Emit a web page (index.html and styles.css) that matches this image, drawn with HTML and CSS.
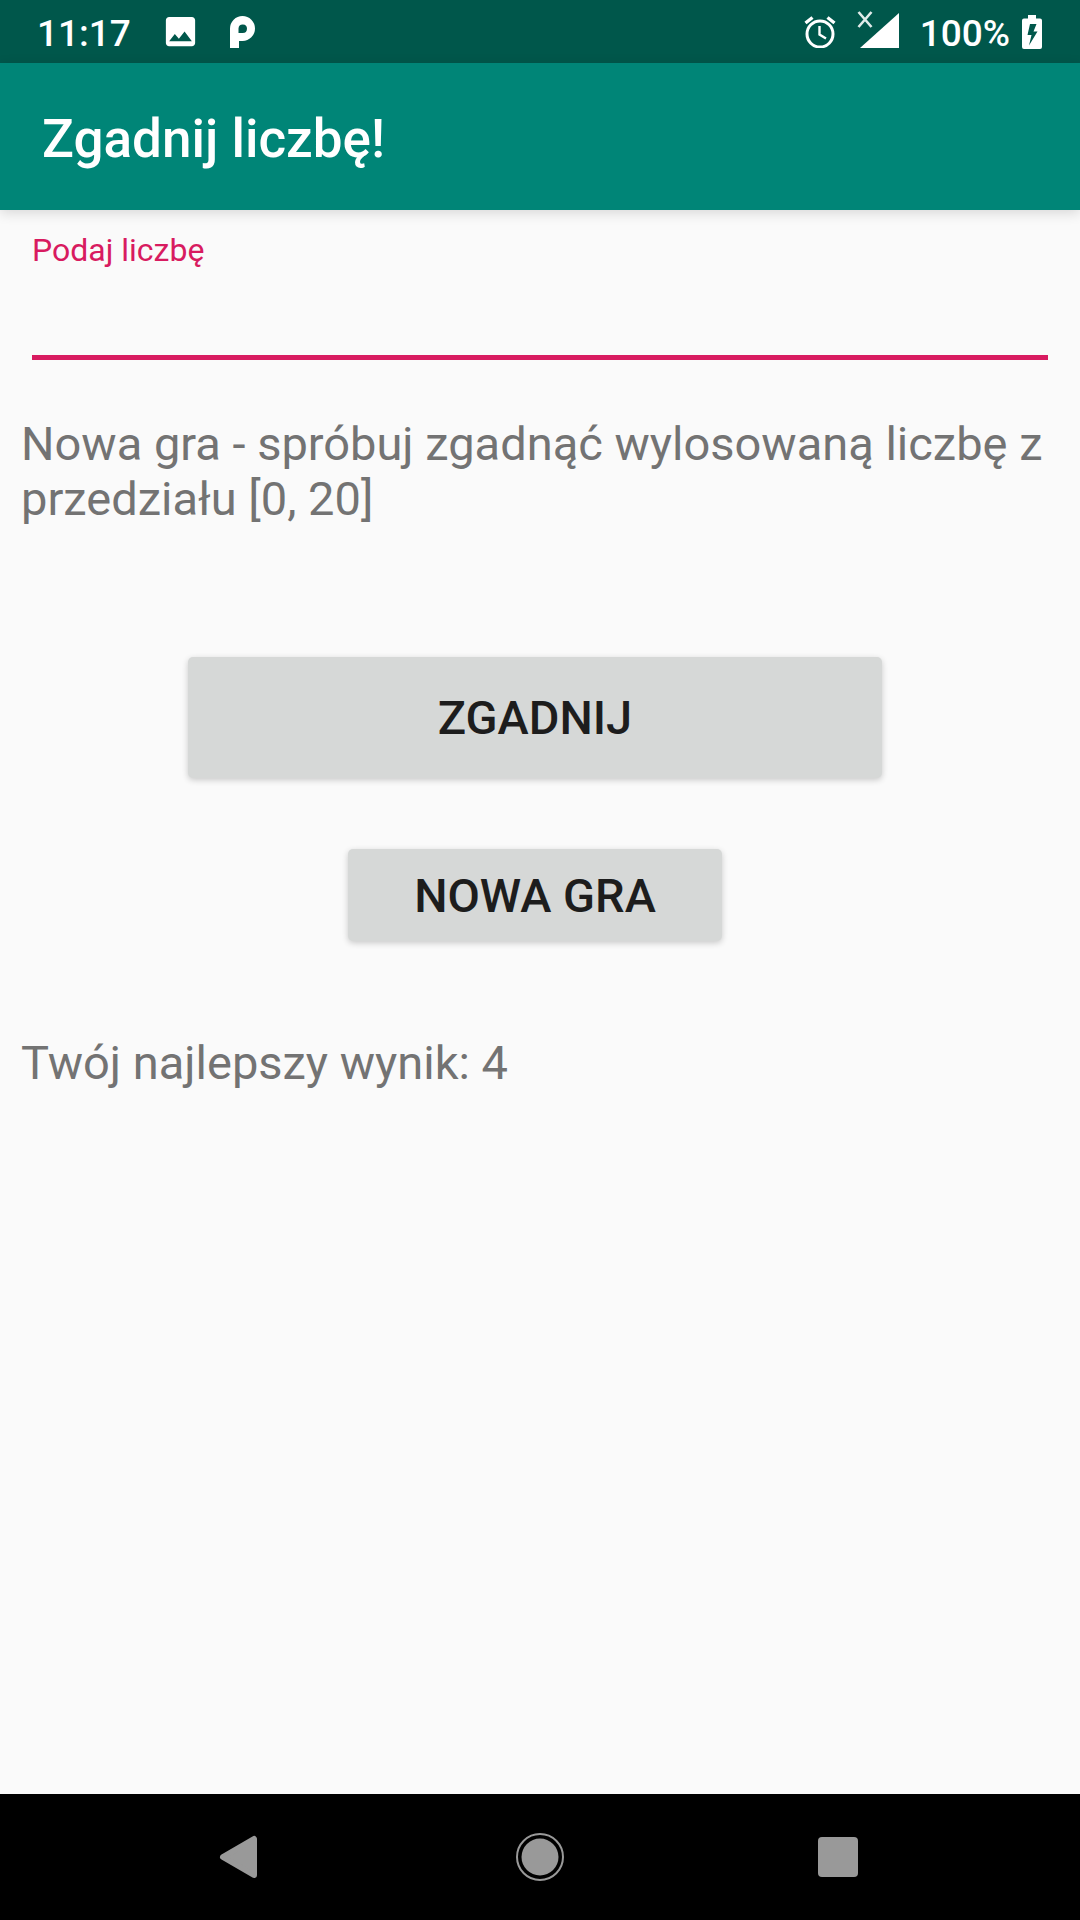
FILE: index.html
```html
<!DOCTYPE html>
<html lang="pl">
<head>
<meta charset="utf-8">
<meta name="viewport" content="width=device-width, initial-scale=1">
<title>Zgadnij liczbę!</title>
<link rel="stylesheet" href="styles.css">
</head>
<body class="screen">
  <div class="status-bar">
    <div class="status-left">
      <span class="status-text">11:17</span>
      <svg class="icon-image" viewBox="0 0 24 24" aria-hidden="true"><path fill="#fff" d="M21 19V5c0-1.100-.9-2-2-2H5c-1.100 0-2 .9-2 2v14c0 1.100.9 2 2 2h14c1.100 0 2-.9 2-2zM8.500 13.500l2.500 3.010L14.500 12l4.500 6H5l3.500-4.500z"/></svg>
      <svg class="icon-p" viewBox="0 0 26 32" aria-hidden="true"><path fill="#fff" fill-rule="evenodd" d="M0 32V12.500A12.500 12.500 0 1 1 12.500 25H9V32ZM8.500 17V12.500A4.250 4.250 0 1 1 12.750 17Z"/></svg>
    </div>
    <div class="status-right">
      <svg class="icon-alarm" viewBox="0 0 32 32" aria-hidden="true"><g fill="none" stroke="#fff"><circle cx="16" cy="18" r="13" stroke-width="3"/><path stroke-width="3.400" d="M1.500 7L8.500 1.500M30.500 7L23.500 1.500"/><path stroke-width="2.400" d="M15.500 10V18.500L22 22.500"/></g></svg>
      <svg class="icon-signal" viewBox="0 0 42 37" aria-hidden="true"><path fill="#fff" d="M3 37L42 2V37Z"/><path fill="none" stroke="#e0ebea" stroke-width="2.600" d="M1.500 1L14.500 16M14.500 1L1.500 16"/></svg>
      <div class="battery">
        <span class="status-text">100%</span>
        <svg class="icon-battery" viewBox="0 0 20 34" aria-hidden="true"><path fill="#fff" fill-rule="evenodd" d="M6 0H14V3.500H18Q20 3.500 20 5.500V32Q20 34 18 34H2Q0 34 0 32V5.500Q0 3.500 2 3.500H6ZM14.500 9H8L5.500 20H9.500L7 30.500L15.500 16.500H11.500Z"/></svg>
      </div>
    </div>
  </div>

  <header class="app-bar">
    <h1 class="app-title">Zgadnij liczbę!</h1>
  </header>

  <main class="content">
    <div class="field">
      <label class="field-label" for="guess">Podaj liczbę</label>
      <input class="field-input" id="guess" type="text" inputmode="numeric">
    </div>
    <p class="message">Nowa gra - spróbuj zgadnąć wylosowaną liczbę z przedziału [0, 20]</p>
    <div class="actions">
      <button class="button button-guess" type="button">ZGADNIJ</button>
      <button class="button button-new" type="button">NOWA GRA</button>
    </div>
    <p class="message">Twój najlepszy wynik: 4</p>
  </main>

  <nav class="nav-bar" aria-label="System">
    <button class="nav-button" type="button" aria-label="Wstecz">
      <svg class="nav-icon" viewBox="0 0 48 48" aria-hidden="true"><path fill="#999" stroke="#999" stroke-width="6" stroke-linejoin="round" d="M5 24L36 6V42Z"/></svg>
    </button>
    <button class="nav-button" type="button" aria-label="Ekran główny">
      <svg class="nav-icon" viewBox="0 0 48 48" aria-hidden="true"><circle cx="24" cy="24" r="18.500" fill="#999"/><circle cx="24" cy="24" r="23" fill="none" stroke="#999" stroke-width="2"/></svg>
    </button>
    <button class="nav-button" type="button" aria-label="Ostatnie">
      <svg class="nav-icon" viewBox="0 0 48 48" aria-hidden="true"><rect x="4" y="4" width="40" height="40" rx="4" fill="#999"/></svg>
    </button>
  </nav>
</body>
</html>
```

FILE: styles.css
```css
* {
  box-sizing: border-box;
}

.screen {
  display: flex;
  flex-direction: column;
  min-height: 100vh;
  margin: 0;
  background: #fafafa;
  font-family: Roboto, "Noto Sans", sans-serif;
}

/* Status bar */
.status-bar {
  display: flex;
  justify-content: space-between;
  height: 63px;
  padding: 0 38px 0 37px;
  background: #00574b;
}

.status-left,
.status-right,
.battery {
  display: flex;
  align-items: center;
}

.status-left {
  gap: 30px;
}

.status-right {
  gap: 21px;
}

.battery {
  gap: 12px;
}

.status-text {
  padding-top: 4px;
  color: #fff;
  font-size: 37px;
  font-weight: 500;
  line-height: 59px;
}

.icon-image {
  width: 39px;
  height: 39px;
}

.icon-p {
  width: 26px;
  height: 32px;
}

.icon-alarm {
  width: 32px;
  height: 32px;
}

.icon-signal {
  width: 42px;
  height: 37px;
  margin-bottom: 4px;
}

.icon-battery {
  width: 20px;
  height: 34px;
}

/* App bar */
.app-bar {
  display: flex;
  align-items: center;
  height: 147px;
  padding: 4px 42px 0;
  background: #008577;
  box-shadow: 0 3px 12px rgba(0, 0, 0, 0.14);
}

.app-title {
  margin: 0;
  color: #fff;
  font-size: 53px;
  font-weight: 500;
  line-height: 62px;
}

/* Content */
.content {
  flex: 1;
  padding: 21px;
}

.field {
  display: flex;
  flex-direction: column;
  margin: 0 11px 56px;
}

.field-label {
  color: #d81b60;
  font-size: 32px;
  line-height: 38px;
}

.field-input {
  width: 100%;
  height: 91px;
  padding: 0;
  border: 0;
  border-bottom: 5px solid #d81b60;
  border-radius: 0;
  background: transparent;
  color: #212121;
  font: 400 47px/55px Roboto, "Noto Sans", sans-serif;
  outline: 0;
}

.message {
  margin: 0;
  color: #737373;
  font-size: 47px;
  line-height: 55px;
}

.actions {
  display: flex;
  flex-direction: column;
  align-items: center;
  gap: 71px;
  padding: 131px 10px 94px 0;
}

.button {
  padding: 0 16px;
  border: 0;
  border-radius: 5px;
  background: #d6d8d7;
  box-shadow: 0 2px 6px rgba(0, 0, 0, 0.2);
  color: #1d1d1d;
  font: 500 47px/55px Roboto, "Noto Sans", sans-serif;
}

.button-guess {
  width: 694px;
  max-width: 100%;
  height: 121px;
}

.button-new {
  width: 374px;
  max-width: 100%;
  height: 92px;
}

/* Navigation bar */
.nav-bar {
  display: flex;
  justify-content: center;
  height: 126px;
  background: #000;
}

.nav-button {
  display: flex;
  align-items: center;
  justify-content: center;
  width: 298px;
  padding: 0;
  border: 0;
  background: transparent;
}

.nav-icon {
  width: 48px;
  height: 48px;
}
```
